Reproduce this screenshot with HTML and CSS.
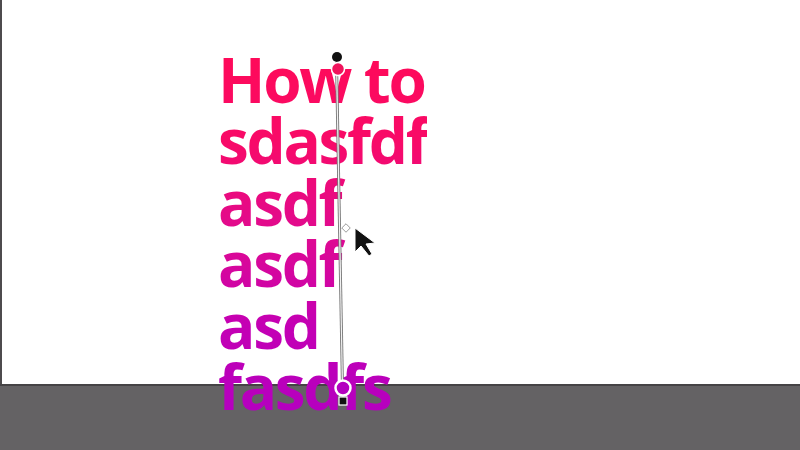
FILE: index.html
```html
<!DOCTYPE html>
<html>
<head>
<meta charset="utf-8">
<link rel="stylesheet" href="styles.css">
</head>
<body>
<div class="app">
  <div class="artboard"></div>
  <div class="pasteboard"></div>
  <div class="textframe">
    <p class="gradtext">How to<br>sdasfdf<br>asdf<br>asdf<br>asd<br>fasdfs</p>
  </div>
  <svg class="tool" width="800" height="450" viewBox="0 0 800 450">
    <line x1="336.5" y1="62" x2="342.5" y2="388" stroke="#777" stroke-width="3"/>
    <line x1="336.5" y1="62" x2="342.5" y2="388" stroke="#f2f2f2" stroke-width="1.2"/>
    <circle cx="337" cy="57" r="5" fill="#111"/>
    <circle cx="338" cy="69" r="6.5" fill="#f0135c" stroke="#fff" stroke-width="1.5"/>
    <rect x="343" y="225" width="6" height="6" fill="#fff" stroke="#888" stroke-width="0.8" transform="rotate(45 346 228)"/>
    <circle cx="343" cy="388" r="7.5" fill="#b400c0" stroke="#fff" stroke-width="2.5"/>
    <rect x="339" y="397" width="8" height="8" fill="#111" stroke="#fff" stroke-width="1.2"/>
    <path d="M355 228 L355 252 L361 246 L369 256 L372 254 L366 244 L375 243 Z" fill="#111" stroke="#fff" stroke-width="1"/>
  </svg>
</div>
</body>
</html>
```
FILE: styles.css
```css
html, body {
  margin: 0;
  padding: 0;
  width: 800px;
  height: 450px;
  overflow: hidden;
  background: #ffffff;
}
.app {
  position: relative;
  width: 800px;
  height: 450px;
  display: flex;
  flex-direction: column;
}
.artboard {
  flex: 1;
  background: #ffffff;
  border-left: 2px solid #4d4b4d;
}
.pasteboard {
  height: 64px;
  background: #646264;
  border-top: 2px solid #454345;
}
.textframe {
  position: absolute;
  left: 218px;
  top: 49px;
}
.gradtext {
  margin: 0;
  font-family: "Open Sans", "Noto Sans", sans-serif;
  font-weight: 700;
  font-size: 62px;
  line-height: 61.4px;
  letter-spacing: -2.3px;
  background: linear-gradient(180deg, #ff0a58 0%, #f80a68 25%, #e00a90 50%, #c400b4 75%, #b400c0 100%);
  -webkit-background-clip: text;
  background-clip: text;
  color: transparent;
}
.tool {
  position: absolute;
  left: 0;
  top: 0;
}
```
